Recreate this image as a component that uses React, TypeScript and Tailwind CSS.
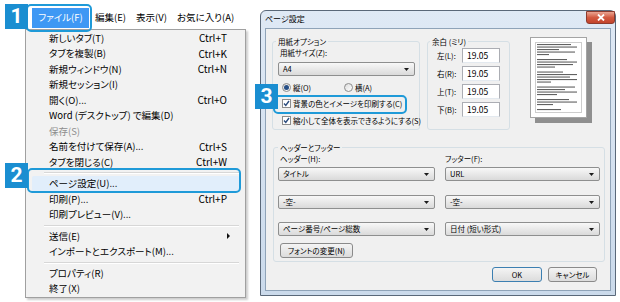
import React from 'react';

type MenuItem =
  | { label: string; shortcut?: string; disabled?: boolean; sub?: boolean; active?: boolean }
  | 'sep';

const fileMenu: MenuItem[] = [
  { label: '新しいタブ(T)', shortcut: 'Ctrl+T' },
  { label: 'タブを複製(B)', shortcut: 'Ctrl+K' },
  { label: '新規ウィンドウ(N)', shortcut: 'Ctrl+N' },
  { label: '新規セッション(I)' },
  { label: '開く(O)...', shortcut: 'Ctrl+O' },
  { label: 'Word (デスクトップ) で編集(D)' },
  { label: '保存(S)', disabled: true },
  { label: '名前を付けて保存(A)...', shortcut: 'Ctrl+S' },
  { label: 'タブを閉じる(C)', shortcut: 'Ctrl+W' },
  'sep',
  { label: 'ページ設定(U)...', active: true },
  { label: '印刷(P)...', shortcut: 'Ctrl+P' },
  { label: '印刷プレビュー(V)...' },
  'sep',
  { label: '送信(E)', sub: true },
  { label: 'インポートとエクスポート(M)...' },
  'sep',
  { label: 'プロパティ(R)' },
  { label: '終了(X)' },
];

// widths of the fake text lines in the page preview (0 = blank line)
const previewLines = [34, 40, 22, 38, 12, 0, 30, 40, 36, 18, 0, 26, 40, 33, 40, 14, 0, 38, 28, 40, 20, 0, 32, 40, 16, 0, 24];

function Badge({ n, className }: { n: string; className: string }) {
  return (
    <div
      className={`absolute w-[23px] h-[25px] bg-[#1a8ed1] text-white flex items-center justify-center font-['Roboto',sans-serif] font-bold text-[21px] leading-none ${className}`}
    >
      {n}
    </div>
  );
}

function Combo({ text, className = '' }: { text: string; className?: string }) {
  return (
    <div
      className={`h-[14px] flex items-center justify-between pl-[4px] pr-[5px] rounded-[2px] border border-[#8e8f8f] bg-linear-to-b from-[#f8f8f8] to-[#dadada] text-[7.5px] leading-none ${className}`}
    >
      <span>{text}</span>
      <svg width="5" height="3" viewBox="0 0 5 3">
        <path d="M0 0h5L2.5 3z" fill="#1b1b1b" />
      </svg>
    </div>
  );
}

function Radio({ checked }: { checked?: boolean }) {
  return (
    <span className="w-[9px] h-[9px] rounded-full border border-[#8c8c8c] bg-linear-to-br from-[#dcdcdc] to-white flex items-center justify-center">
      {checked && <span className="w-[5px] h-[5px] rounded-full bg-[#274f86]" />}
    </span>
  );
}

function Check() {
  return (
    <span className="w-[9px] h-[9px] border border-[#8c8c8c] bg-white flex items-center justify-center">
      <svg width="7" height="7" viewBox="0 0 7 7">
        <path d="M1 3.5l1.8 2L6 1" fill="none" stroke="#2b4c7e" strokeWidth="1.4" />
      </svg>
    </span>
  );
}

function MarginRow({ label }: { label: string }) {
  return (
    <div className="flex items-center h-[15px]">
      <span className="w-[25px] text-[7.5px] leading-none">{label}</span>
      <div className="w-[38px] h-[15px] bg-white border border-[#abadb3] border-b-[#e3e9ef] pl-[4px] flex items-center text-[8.5px] leading-none">
        19.05
      </div>
    </div>
  );
}

function WinButton({ children, focused, className = '' }: { children: React.ReactNode; focused?: boolean; className?: string }) {
  return (
    <div
      className={`h-[15px] flex items-center justify-center rounded-[3px] border bg-linear-to-b from-[#f4f4f4] to-[#dcdcdc] text-[7.5px] leading-none ${
        focused ? 'border-[#3c7fb1]' : 'border-[#8a8a8a]'
      } ${className}`}
    >
      {children}
    </div>
  );
}

export default function App() {
  return (
    <div className="relative w-[620px] h-[302px] bg-white flex overflow-hidden text-black font-['Noto_Sans_CJK_JP',sans-serif] [font-feature-settings:'palt']">
      {/* IE file menu */}
      <div className="w-[255px] h-full shrink-0">
        <div className="flex items-center h-[20px] mt-[8px] ml-[32px] text-[9.5px] leading-none">
          <div className="w-[57px] h-full bg-[#3e98f4] text-white flex items-center justify-center">ファイル(F)</div>
          <span className="ml-[6px]">編集(E)</span>
          <span className="ml-[10px]">表示(V)</span>
          <span className="ml-[10px]">お気に入り(A)</span>
        </div>

        <div className="ml-[25px] mt-[1px] w-[221px] border border-[#a0a0a0] bg-[#f2f2f2] py-[0.5px] text-[9.5px] leading-none shadow-[2px_2px_2px_rgba(0,0,0,0.2)]">
          {fileMenu.map((item, i) =>
            item === 'sep' ? (
              <div key={i} className="h-[6px] flex flex-col justify-center ml-[18px] mr-[6px]">
                <div className="h-px bg-[#d7d7d7]" />
                <div className="h-px bg-white" />
              </div>
            ) : (
              <div
                key={i}
                className={`h-[15.5px] flex items-center justify-between pr-[18px] ${
                  item.active ? 'mx-[6px] pl-[17px] bg-[#e1eefb] rounded-[2px]' : 'pl-[23px]'
                } ${item.disabled ? 'text-[#8d8d8d]' : ''}`}
              >
                <span>{item.label}</span>
                {item.shortcut && <span className="text-[10px]">{item.shortcut}</span>}
                {item.sub && (
                  <svg width="3" height="6" viewBox="0 0 3 6" className="mr-[-3px]">
                    <path d="M0 0l3 3-3 3z" fill="#111" />
                  </svg>
                )}
              </div>
            )
          )}
        </div>
      </div>

      {/* Page setup dialog */}
      <div className="ml-[5px] mt-[10px] w-[356px] h-[286px] flex flex-col rounded-t-[6px] border border-[#5a6879] bg-linear-to-b from-[#dfe9f5] to-[#cbdaeb] px-[4px] pb-[4px]">
        <div className="h-[17px] shrink-0 flex items-start justify-between">
          <span className="mt-[4px] text-[8px] leading-none">ページ設定</span>
          <div className="w-[29px] h-[13px] -mr-[4px] rounded-b-[3px] border border-[#8d3b2e] bg-linear-to-b from-[#e9a492] via-[#d35a41] to-[#c2432b] flex items-center justify-center">
            <svg width="8" height="7" viewBox="0 0 8 7">
              <path d="M1 0.5l6 6M7 0.5l-6 6" stroke="white" strokeWidth="1.8" />
            </svg>
          </div>
        </div>

        <div className="flex-1 border border-[#8fa3b8] bg-[#f0f0f0] flex flex-col">
          {/* top row */}
          <div className="flex items-start pt-[7px] pl-[6px]">
            <fieldset className="min-w-0 w-[148px] h-[94px] shrink-0 border border-[#d5dfe5] rounded-[3px]">
              <legend className="ml-[3px] px-[2px] text-[7.5px] leading-[11px]">用紙オプション</legend>
              <div className="px-[5px] flex flex-col">
                <span className="h-[11px] ml-[2px] text-[7.5px] leading-[11px]">用紙サイズ(Z):</span>
                <Combo text="A4" className="mt-[4px] w-[137px]" />
                <div className="mt-[6px] h-[11px] flex items-center text-[7.5px] leading-none">
                  <span className="ml-[4px] flex items-center gap-[2px] w-[62px]">
                    <Radio checked />
                    縦(O)
                  </span>
                  <span className="flex items-center gap-[2px]">
                    <Radio />
                    横(A)
                  </span>
                </div>
                <div className="mt-[5px] h-[11px] ml-[4px] flex items-center gap-[2px] text-[7.5px] leading-none whitespace-nowrap">
                  <Check />
                  背景の色とイメージを印刷する(C)
                </div>
                <div className="mt-[6px] h-[11px] ml-[4px] flex items-center gap-[2px] text-[7.5px] leading-none whitespace-nowrap">
                  <Check />
                  縮小して全体を表示できるようにする(S)
                </div>
              </div>
            </fieldset>

            <fieldset className="min-w-0 ml-[7px] w-[83px] h-[94px] shrink-0 border border-[#d5dfe5] rounded-[3px]">
              <legend className="ml-[2px] px-[2px] text-[7.5px] leading-[11px]">余白 (ミリ)</legend>
              <div className="mt-[1px] pl-[9px] flex flex-col gap-[3px]">
                <MarginRow label="左(L):" />
                <MarginRow label="右(R):" />
                <MarginRow label="上(T):" />
                <MarginRow label="下(B):" />
              </div>
            </fieldset>

            <svg width="62" height="86" viewBox="0 0 62 86" className="ml-[20px] mt-[1px] shrink-0">
              <rect x="5" y="5" width="57" height="81" fill="#8f8f8f" />
              <rect x="0.5" y="0.5" width="56" height="80" fill="#fff" stroke="#a4a4a4" />
              <rect x="5.5" y="5.5" width="46" height="70" fill="none" stroke="#9a9a9a" strokeDasharray="1 1" />
              {previewLines.map((w, i) =>
                w ? <rect key={i} x="7" y={7 + i * 2.5} width={w} height="1.1" fill="#3a3a3a" opacity="0.8" /> : null
              )}
            </svg>
          </div>

          {/* header / footer */}
          <fieldset className="min-w-0 mt-[12px] ml-[7px] w-[332px] border border-[#d5dfe5] rounded-[3px]">
            <legend className="ml-[4px] px-[2px] text-[7.5px] leading-[11px]">ヘッダーとフッター</legend>
            <div className="px-[4px] pb-[3px] grid grid-cols-[157px_155px] gap-x-[10px]">
              <div className="flex flex-col">
                <span className="h-[11px] pl-[2px] text-[7.5px] leading-[11px]">ヘッダー(H):</span>
                <Combo text="タイトル" className="mt-[3px]" />
                <Combo text="-空-" className="mt-[14px]" />
                <Combo text="ページ番号/ページ総数" className="mt-[13px]" />
                <WinButton className="mt-[7px] ml-[2px] w-[73px]">フォントの変更(N)</WinButton>
              </div>
              <div className="flex flex-col">
                <span className="h-[11px] text-[7.5px] leading-[11px]">フッター(F):</span>
                <Combo text="URL" className="mt-[3px]" />
                <Combo text="-空-" className="mt-[14px]" />
                <Combo text="日付 (短い形式)" className="mt-[13px]" />
              </div>
            </div>
          </fieldset>

          <div className="mt-[5px] pr-[13px] flex justify-end gap-[6px]">
            <WinButton focused className="w-[50px]">OK</WinButton>
            <WinButton className="w-[49px]">キャンセル</WinButton>
          </div>
        </div>
      </div>

      {/* callouts */}
      <div className="absolute left-[26px] top-[4px] w-[66px] h-[28px] border-2 border-[#1f9ad8] rounded-[5px]" />
      <div className="absolute left-[27px] top-[168px] w-[214px] h-[25px] border-2 border-[#1f9ad8] rounded-[5px]" />
      <div className="absolute left-[273px] top-[95px] w-[134px] h-[19px] border-2 border-[#1f9ad8] rounded-[5px]" />
      <Badge n="1" className="left-[5px] top-[4px]" />
      <Badge n="2" className="left-[5px] top-[163px]" />
      <Badge n="3" className="left-[255px] top-[84px]" />
    </div>
  );
}
